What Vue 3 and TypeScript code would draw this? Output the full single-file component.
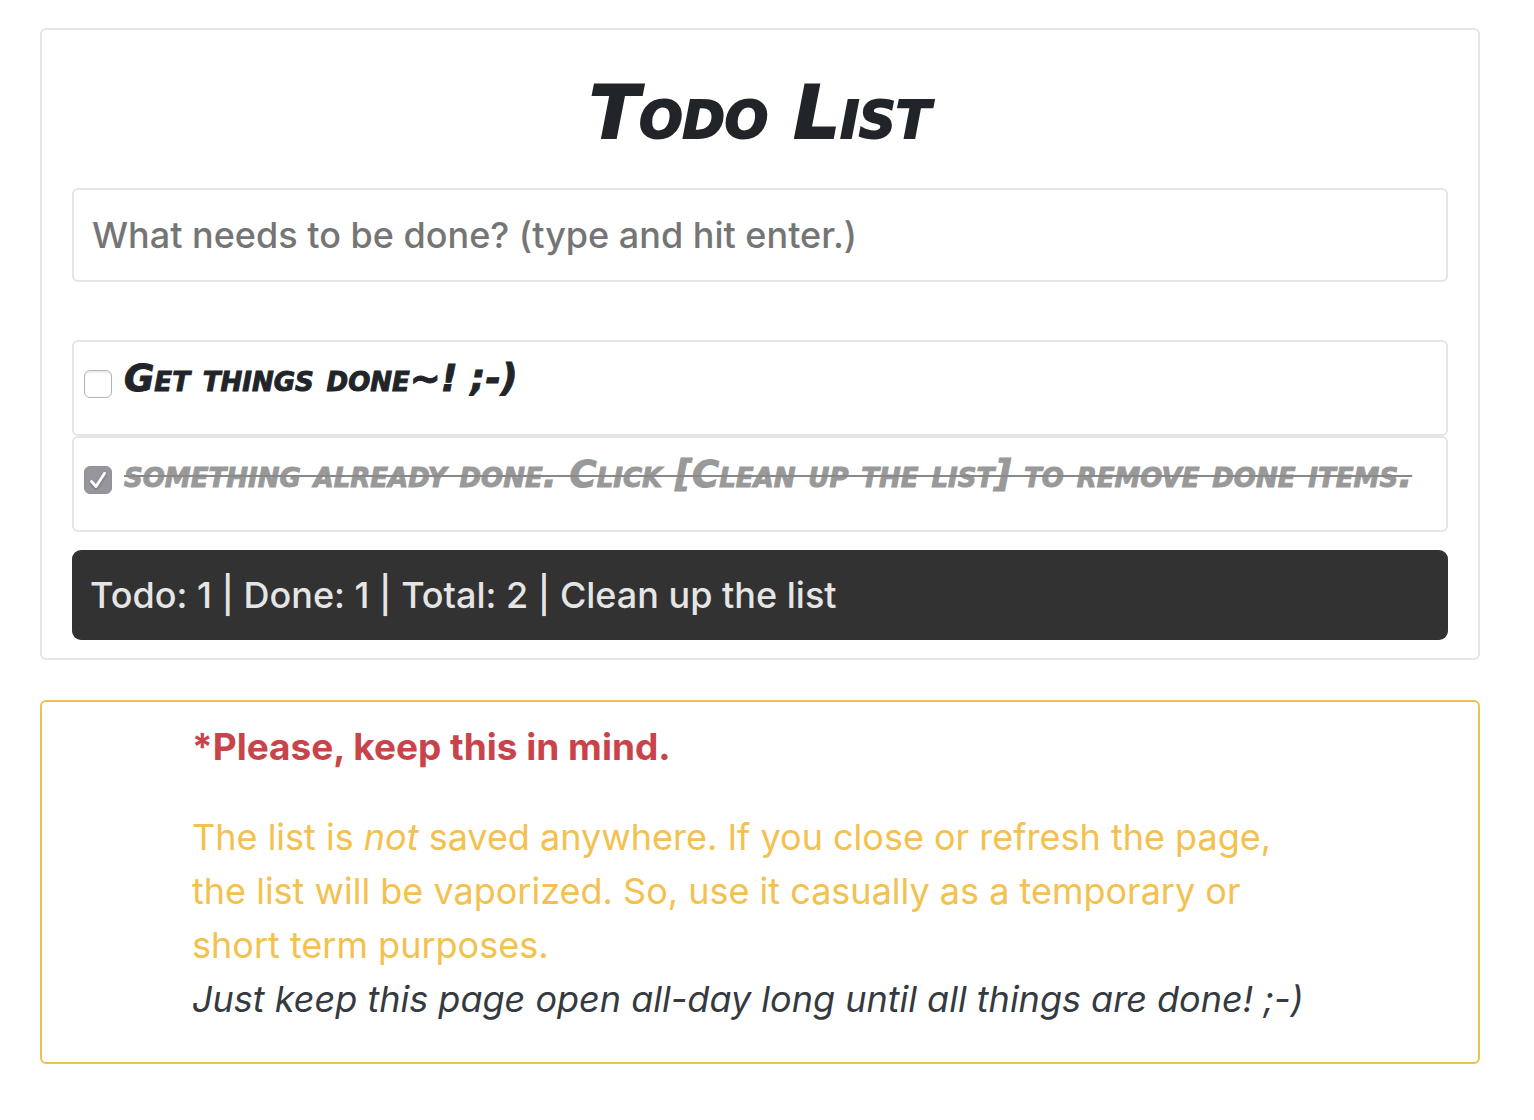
<script setup lang="ts">
import { computed, ref } from 'vue'

interface TodoItem {
  id: number
  text: string
  done: boolean
}

const draft = ref('')
const items = ref<TodoItem[]>([
  { id: 1, text: 'Get things done~! ;-)', done: false },
  { id: 2, text: 'something already done. Click [Clean up the list] to remove done items.', done: true },
])

const doneCount = computed(() => items.value.filter((item) => item.done).length)
const todoCount = computed(() => items.value.length - doneCount.value)

function addItem(): void {
  const text = draft.value.trim()
  if (!text) return
  items.value.unshift({ id: Date.now(), text, done: false })
  draft.value = ''
}

function cleanUp(): void {
  items.value = items.value.filter((item) => !item.done)
}
</script>

<template>
  <main class="page">
    <section class="card">
      <h1 class="title">Todo List</h1>
      <form @submit.prevent="addItem">
        <input
          v-model="draft"
          class="entry"
          type="text"
          aria-label="New item"
          placeholder="What needs to be done? (type and hit enter.)"
        />
      </form>
      <ul class="list">
        <li v-for="item in items" :key="item.id" class="item" :class="{ done: item.done }">
          <span class="check">
            <input :id="`item-${item.id}`" v-model="item.done" class="box" type="checkbox" />
            <svg v-if="item.done" class="tick" viewBox="0 0 28 28" aria-hidden="true">
              <path d="M7.5 15.5 12 20.5 20.5 7.5" />
            </svg>
          </span>
          <label class="text" :for="`item-${item.id}`">{{ item.text }}</label>
        </li>
      </ul>
      <footer class="status">
        Todo: {{ todoCount }} | Done: {{ doneCount }} | Total: {{ items.length }} |
        <button class="clean" type="button" @click="cleanUp">Clean up the list</button>
      </footer>
    </section>

    <section class="notice">
      <p class="heading">*Please, keep this in mind.</p>
      <p class="body">
        The list is <em>not</em> saved anywhere. If you close or refresh the page, the list will be
        vaporized. So, use it casually as a temporary or short term purposes.<br />
        <em class="tip">Just keep this page open all-day long until all things are done! ;-)</em>
      </p>
    </section>
  </main>
</template>

<style>
body {
  margin: 0;
  background: #fff;
}
</style>

<style scoped>
.page {
  box-sizing: border-box;
  padding: 28px 54px 56px 40px;
  font: 400 36px/54px Inter, "Liberation Sans", sans-serif;
  color: #212529;
}

.card {
  padding: 0 30px 18px;
  border: 2px solid #e5e5e5;
  border-radius: 6px;
}

.title,
.text {
  font-family: "Permanent Marker", "DejaVu Sans", sans-serif;
  font-style: italic;
  font-weight: 700;
  font-variant: small-caps;
}

.title {
  margin: 0;
  padding: 38px 0 30px;
  font-size: 73px;
  line-height: 90px;
  text-align: center;
  -webkit-text-stroke: 2px currentColor;
}

.entry {
  display: block;
  box-sizing: border-box;
  width: 100%;
  height: 94px;
  padding: 0 18px;
  border: 2px solid #e5e5e5;
  border-radius: 6px;
  background: #fff;
  font: inherit;
  font-weight: 500;
  color: inherit;
}

.entry::placeholder {
  color: #757575;
  opacity: 1;
}

.list {
  margin: 58px 0 18px;
  padding: 0;
  list-style: none;
}

.item {
  display: flex;
  gap: 12px;
  box-sizing: border-box;
  min-height: 96px;
  padding: 10px;
  border: 2px solid #e5e5e5;
  border-radius: 6px;
}

.check {
  display: grid;
  flex: none;
  width: 28px;
  height: 28px;
  margin-top: 18px;
}

.box {
  grid-area: 1 / 1;
  appearance: none;
  box-sizing: border-box;
  width: 28px;
  height: 28px;
  margin: 0;
  border: 1px solid #b4b4b4;
  border-radius: 6px;
  background: #fff;
  box-shadow: inset 0 2px 2px #eee;
}

.box:checked {
  border-color: #929198;
  background: #97969d;
  box-shadow: none;
}

.tick {
  grid-area: 1 / 1;
  width: 28px;
  height: 28px;
  fill: none;
  stroke: #fff;
  stroke-width: 3;
  stroke-linecap: round;
  stroke-linejoin: round;
  filter: drop-shadow(0 1px 1px #66666c);
  pointer-events: none;
}

.text {
  font-size: 37px;
  line-height: 54px;
  -webkit-text-stroke: 1px currentColor;
}

.done .text {
  color: #999;
  text-decoration: line-through 2px #888;
}

.status {
  padding: 18px;
  border-radius: 9px;
  background: #323232;
  font-weight: 500;
  color: #e5e5e5;
}

.clean {
  padding: 0;
  border: 0;
  background: none;
  font: inherit;
  color: inherit;
  cursor: pointer;
}

.notice {
  margin-top: 40px;
  padding: 18px 150px 0;
  border: 2px solid #ecc152;
  border-radius: 6px;
}

.heading,
.body {
  margin: 0 0 36px;
}

.heading {
  font-size: 37px;
  font-weight: 700;
  color: #c9444a;
}

.body {
  color: #f3c14f;
}

.tip {
  color: #343a40;
}
</style>
